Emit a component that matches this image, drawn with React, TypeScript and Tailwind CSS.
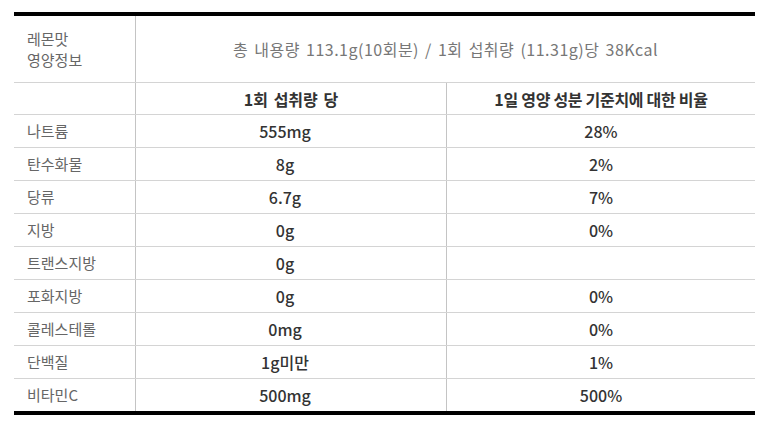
const rows: [string, string, string][] = [
  ["나트륨", "555mg", "28%"],
  ["탄수화물", "8g", "2%"],
  ["당류", "6.7g", "7%"],
  ["지방", "0g", "0%"],
  ["트랜스지방", "0g", ""],
  ["포화지방", "0g", "0%"],
  ["콜레스테롤", "0mg", "0%"],
  ["단백질", "1g미만", "1%"],
  ["비타민C", "500mg", "500%"],
];

export default function App() {
  return (
    <div className="h-[427px] w-[773px] overflow-hidden bg-white pt-3 font-['Noto_Sans_CJK_KR',sans-serif] text-[15px]">
      <div className="ml-[14px] w-[741px] border-y-4 border-black">
        <div className="grid h-[67px] grid-cols-[122px_1fr] border-b border-[#d4d4d4]">
          <div className="flex flex-col justify-center border-r border-[#c4c4c4] px-[13px] leading-[21px] text-[#666]">
            <span>레몬맛</span>
            <span>영양정보</span>
          </div>
          <div className="flex items-center justify-center text-[16px] tracking-[0.5px] [word-spacing:2px] text-[#777]">
            총 내용량 113.1g(10회분) / 1회 섭취량 (11.31g)당 38Kcal
          </div>
        </div>
        <div className="grid h-[32px] grid-cols-[122px_311px_1fr] border-b border-[#d4d4d4] text-[16px] font-bold text-[#333]">
          <div className="border-r border-[#c4c4c4]" />
          <div className="flex items-center justify-center border-r border-[#c4c4c4] [word-spacing:2px]">1회 섭취량 당</div>
          <div className="flex items-center justify-center tracking-[-0.3px]">1일 영양 성분 기준치에 대한 비율</div>
        </div>
        {rows.map(([name, amount, pct], i) => (
          <div
            key={name}
            className={
              i === rows.length - 1
                ? "grid h-[32px] grid-cols-[122px_311px_1fr]"
                : "grid h-[33px] grid-cols-[122px_311px_1fr] border-b border-[#d4d4d4]"
            }
          >
            <div className="flex items-center border-r border-[#c4c4c4] px-[13px] text-[#666]">{name}</div>
            <div className="flex items-center justify-center border-r border-[#c4c4c4] pr-[12px] text-[16px] font-medium text-[#333]">
              {amount}
            </div>
            <div className="flex items-center justify-center text-[16px] font-medium text-[#333]">{pct}</div>
          </div>
        ))}
      </div>
    </div>
  );
}
